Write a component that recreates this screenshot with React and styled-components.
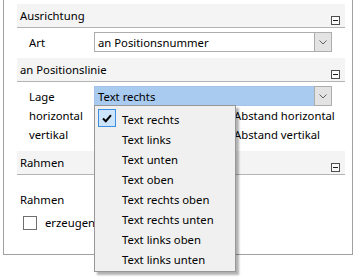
import React from 'react'
import styled, { createGlobalStyle } from 'styled-components'

const GlobalStyle = createGlobalStyle`
  html, body, #root {
    margin: 0;
    padding: 0;
    height: 100%;
    background: #ffffff;
  }
  body {
    font-family: 'Noto Sans', 'Open Sans', sans-serif;
    font-size: 11.3px;
    color: #000000;
  }
`

const Page = styled.div`
  min-height: 277px;
  height: 100%;
`

const Panel = styled.div`
  box-sizing: border-box;
  width: 350px;
  height: 255px;
  margin-left: 3px;
  padding: 4px 7px 0 13px;
  border: 1px solid #a0a0a0;
  border-top: none;
  display: flex;
  flex-direction: column;
`

const SectionHeader = styled.div`
  box-sizing: border-box;
  flex: none;
  height: 24px;
  display: flex;
  align-items: center;
  justify-content: space-between;
  padding-left: 3px;
  background: #f4f4f4;
  border-bottom: 1px solid #b4b4b4;
  margin-top: ${({ $gap }) => $gap || 0}px;
`

const Collapse = styled.span`
  box-sizing: border-box;
  align-self: flex-end;
  width: 9px;
  height: 9px;
  margin: 0 5px 2px 0;
  border: 1px solid #4d4d4d;
  background: #fbfbfb;
  display: flex;
  align-items: center;
  justify-content: center;

  &::after {
    content: '';
    width: 5px;
    height: 1px;
    background: #1e1e1e;
  }
`

const Row = styled.div`
  flex: none;
  display: grid;
  grid-template-columns: 77px 1fr;
  align-items: center;
  height: ${({ $h }) => $h || 19}px;
  margin-top: ${({ $gap }) => $gap || 0}px;
  padding-left: ${({ $indent }) => ($indent === undefined ? 12 : $indent)}px;
`

const Label = styled.span`
  white-space: nowrap;
`

const SplitCell = styled.div`
  display: grid;
  grid-template-columns: 140px 1fr;
  align-items: center;
  margin-left: -12px;
`

const ComboWrap = styled.div`
  position: relative;
  width: 238px;
  height: 20px;
  margin-left: -12px;
`

const Combo = styled.div`
  box-sizing: border-box;
  height: 100%;
  display: flex;
  align-items: stretch;
  border: 1px solid ${({ $active }) => ($active ? '#a3c4e8' : '#adadad')};
  background: ${({ $active }) => ($active ? '#a9cbf0' : '#ffffff')};
`

const ComboText = styled.span`
  flex: 1;
  display: flex;
  align-items: center;
  padding-left: 3px;
  white-space: nowrap;
  overflow: hidden;
`

const ComboButton = styled.span`
  box-sizing: border-box;
  width: 18px;
  display: flex;
  align-items: center;
  justify-content: center;
  background: #e3e3e3;
  border: 1px solid #adadad;
  margin: -1px -1px -1px 0;
`

const Menu = styled.div`
  position: absolute;
  top: calc(100% - 1px);
  left: 0;
  z-index: 2;
  box-sizing: border-box;
  width: 142px;
  padding: 3px 2px 2px 2px;
  background: #f0f0f0;
  border: 1px solid #979797;
  box-shadow: 3px 3px 2px rgba(0, 0, 0, 0.3);
`

const MenuItem = styled.div`
  position: relative;
  height: 20px;
  display: flex;
  align-items: center;
  padding-left: 25px;
  white-space: nowrap;
`

const CheckMark = styled.span`
  position: absolute;
  left: 1px;
  top: 0;
  box-sizing: border-box;
  width: 18px;
  height: 18px;
  border: 1px solid #3d8ee0;
  background: #cde5fb;
  display: flex;
  align-items: center;
  justify-content: center;
`

const CheckBox = styled.span`
  box-sizing: border-box;
  width: 14px;
  height: 14px;
  border: 1px solid #6e6e6e;
  background: #ffffff;
  margin-left: 6px;
`

const CheckRow = styled.div`
  flex: none;
  display: flex;
  align-items: center;
  gap: 8px;
  height: 19px;
  margin-top: 4px;
`

const Chevron = () => (
  <svg width="8" height="5" viewBox="0 0 8 5">
    <path d="M0.5 0.5 L4 4 L7.5 0.5" fill="none" stroke="#606060" strokeWidth="1" />
  </svg>
)

const Tick = () => (
  <svg width="10" height="9" viewBox="0 0 10 9">
    <path d="M1 4.5 L3.8 7.2 L9 1.2" fill="none" stroke="#000" strokeWidth="2" />
  </svg>
)

const lagen = [
  'Text rechts',
  'Text links',
  'Text unten',
  'Text oben',
  'Text rechts oben',
  'Text rechts unten',
  'Text links oben',
  'Text links unten',
]

export default function App() {
  return (
    <Page>
      <GlobalStyle />
      <Panel>
        <SectionHeader>
          Ausrichtung
          <Collapse />
        </SectionHeader>
        <Row $h={20} $gap={4}>
          <Label>Art</Label>
          <ComboWrap>
            <Combo>
              <ComboText>an Positionsnummer</ComboText>
              <ComboButton>
                <Chevron />
              </ComboButton>
            </Combo>
          </ComboWrap>
        </Row>

        <SectionHeader $gap={6}>
          an Positionslinie
          <Collapse />
        </SectionHeader>
        <Row $h={20} $gap={4}>
          <Label>Lage</Label>
          <ComboWrap>
            <Combo $active>
              <ComboText>Text rechts</ComboText>
              <ComboButton>
                <Chevron />
              </ComboButton>
            </Combo>
            <Menu>
              {lagen.map((l, i) => (
                <MenuItem key={l}>
                  {i === 0 && (
                    <CheckMark>
                      <Tick />
                    </CheckMark>
                  )}
                  {l}
                </MenuItem>
              ))}
            </Menu>
          </ComboWrap>
        </Row>
        <Row>
          <Label>horizontal</Label>
          <SplitCell>
            <span />
            <Label>Abstand horizontal</Label>
          </SplitCell>
        </Row>
        <Row>
          <Label>vertikal</Label>
          <SplitCell>
            <span />
            <Label>Abstand vertikal</Label>
          </SplitCell>
        </Row>

        <SectionHeader $gap={7}>
          Rahmen
          <Collapse />
        </SectionHeader>
        <Row $gap={14} $h={20} $indent={3}>
          <Label>Rahmen</Label>
        </Row>
        <CheckRow>
          <CheckBox />
          <span>erzeugen</span>
        </CheckRow>
      </Panel>
    </Page>
  )
}
